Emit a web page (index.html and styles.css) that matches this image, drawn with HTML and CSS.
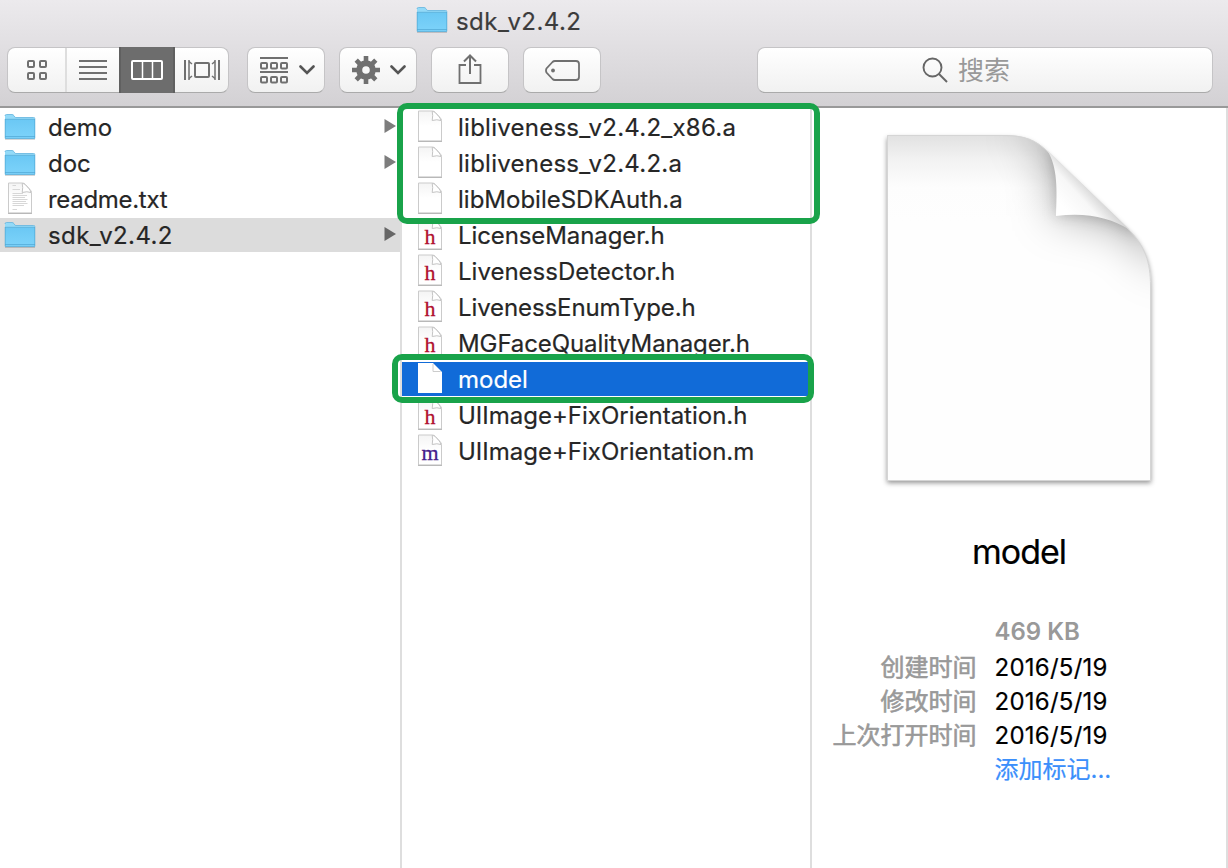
FILE: index.html
```html
<!DOCTYPE html>
<html lang="zh-CN">
<head>
<meta charset="utf-8">
<title>sdk_v2.4.2</title>
<link rel="stylesheet" href="styles.css">
</head>
<body>
<svg class="defs" width="0" height="0" aria-hidden="true">
  <defs>
    <linearGradient id="blue" x1="0" y1="0" x2="0" y2="1"><stop offset="0" stop-color="#6bc8f4"/><stop offset="1" stop-color="#7dd3fa"/></linearGradient>
    <linearGradient id="sheet" x1="0" y1="0" x2="0" y2="1"><stop offset="0" stop-color="#f4f4f4"/><stop offset=".5" stop-color="#fff"/></linearGradient>
    <symbol id="folder" viewBox="0 0 32 27">
      <path d="M1 25.2H31" stroke="#000" stroke-opacity=".18" stroke-width="1.4"/>
      <path d="M1 2q0-1.500 1.500-1.500H8q1.200 0 2 1.200L11.300 3.500H29.500q1.500 0 1.500 1.500V10H1Z" fill="#93daf8"/>
      <path d="M1 2q0-1.500 1.500-1.500H8q1.200 0 2 1.200L11.300 3.500H29.500q1.500 0 1.500 1" fill="none" stroke="#62b4de" stroke-width=".8"/>
      <path d="M1 5.500H31V24q0 .7-.7.7H1.700Q1 24.700 1 24Z" fill="url(#blue)"/>
      <path d="M1 5.300H31M1.200 5V24.400H30.800V5M1 22.500H31" fill="none" stroke="#4fa6d2" stroke-width=".7"/>
    </symbol>
    <symbol id="file" viewBox="0 0 26 33">
      <path d="M1.500 1H15.500Q17 1 18.500 2.500L23 7.500Q24.500 9 24.500 10.500V31H1.500Z" fill="url(#sheet)" stroke="#cbcbcb" stroke-width="1"/>
      <path d="M1 31.400H25" stroke="#adadad" stroke-width=".9"/>
      <path d="M15.200 1.500Q16.200 5 15.200 10.500Q20 9 24 10.500Q23.500 8.500 22 6.800L18.500 2.800Q17 1.300 15.200 1.500Z" fill="#fff" stroke="#c4c4c4" stroke-width="1"/>
    </symbol>
    <symbol id="arrow" viewBox="0 0 12 14"><path d="M.5 0 12 7 .5 14Z" fill="currentColor"/></symbol>
    <symbol id="chevron" viewBox="0 0 16 10"><path d="M1.500 1.500 8 8 14.500 1.500" fill="none" stroke="#555" stroke-width="2.600" stroke-linecap="round"/></symbol>
  </defs>
</svg>

<div class="window">
  <header class="chrome">
    <div class="title"><svg class="folder"><use href="#folder"/></svg><span>sdk_v2.4.2</span></div>
    <div class="toolbar">
      <div class="views">
        <div class="view grid-view"><svg width="22" height="22" viewBox="0 0 22 22" fill="none" stroke="#707070" stroke-width="2"><rect x="2" y="2" width="6" height="6" rx="1"/><rect x="14" y="2" width="6" height="6" rx="1"/><rect x="2" y="14" width="6" height="6" rx="1"/><rect x="14" y="14" width="6" height="6" rx="1"/></svg></div>
        <div class="view list-view"><svg width="28" height="20" viewBox="0 0 28 20" stroke="#707070" stroke-width="2"><path d="M0 1H28M0 7H28M0 13H28M0 19H28"/></svg></div>
        <div class="view active"><svg width="32" height="20" viewBox="0 0 32 20" fill="none" stroke="#fff"><rect x="1" y="1" width="30" height="18" rx="1" stroke-width="2"/><path d="M11.500 1V19M21.500 1V19" stroke-width="1.500"/></svg></div>
        <div class="view"><svg width="36" height="20" viewBox="0 0 36 20" fill="none" stroke="#707070"><rect x="11" y="3" width="14" height="14" rx="1" stroke-width="2"/><path d="M1 0V20M35 0V20" stroke-width="2"/><path d="M5 0V20M31 0V20" stroke-width="1.500"/><path d="M5 1.500 8 4M5 18.500 8 16M31 1.500 28 4M31 18.500 28 16" stroke-width="1.500"/></svg></div>
      </div>
      <div class="button"><svg width="28" height="27" viewBox="0 0 28 27" fill="none" stroke="#707070" stroke-width="2"><path d="M0 1H28M0 15H28"/><rect x="1" y="6" width="6" height="5.500" rx="1"/><rect x="11" y="6" width="6" height="5.500" rx="1"/><rect x="21" y="6" width="6" height="5.500" rx="1"/><rect x="1" y="20" width="6" height="5.500" rx="1"/><rect x="11" y="20" width="6" height="5.500" rx="1"/><rect x="21" y="20" width="6" height="5.500" rx="1"/></svg><svg class="chevron"><use href="#chevron"/></svg></div>
      <div class="button gear"><svg width="28" height="28" viewBox="0 0 28 28"><g fill="none" stroke="#707070"><circle cx="14" cy="14" r="6.800" stroke-width="6"/><g stroke-width="4.600"><path d="M14 0V6M14 22V28M0 14H6M22 14H28"/><path d="M4.200 4.200 8 8M20 20 23.800 23.800M4.200 23.800 8 20M20 8 23.800 4.200"/></g></g></svg><svg class="chevron"><use href="#chevron"/></svg></div>
      <div class="button share"><svg width="24" height="30" viewBox="0 0 24 30" fill="none" stroke="#707070" stroke-width="2"><path d="M8 11H1.500V29H22.500V11H16" stroke-width="1.800"/><path d="M12 20V1M6 7.500 12 1.500 18 7.500"/></svg></div>
      <div class="button tag"><svg width="35" height="21" viewBox="0 0 35 21" fill="none" stroke="#707070" stroke-width="1.800"><path d="M10 1H31Q34 1 34 4V17Q34 20 31 20H10Q8.500 20 7.500 19L1.500 12.500Q.5 10.500 1.500 8.500L7.500 2Q8.500 1 10 1Z"/><circle cx="8" cy="10.500" r="1.900" fill="#707070" stroke="none"/></svg></div>
      <div class="search"><svg width="26" height="26" viewBox="0 0 26 26" fill="none" stroke="#666" stroke-width="1.900"><circle cx="10.500" cy="10.500" r="9"/><path d="M17 17 25 25"/></svg><span>搜索</span></div>
    </div>
  </header>

  <main class="columns">
    <section class="column places">
      <div class="row"><svg class="folder"><use href="#folder"/></svg><span class="name">demo</span><svg class="arrow"><use href="#arrow"/></svg></div>
      <div class="row"><svg class="folder"><use href="#folder"/></svg><span class="name">doc</span><svg class="arrow"><use href="#arrow"/></svg></div>
      <div class="row"><svg class="text-file" viewBox="0 0 26 33"><use href="#file"/><path d="M5.500 3.500H9M5.500 7.500H13M5.500 11.500H16M5.500 13.500H20M5.500 15.500H18M5.500 17.500H20.500M5.500 19.500H19M5.500 21.500H20.500M5.500 23.500H17M5.500 27.500H10" stroke="#d2d2d2" stroke-width=".9"/></svg><span class="name tight">readme.txt</span></div>
      <div class="row current"><svg class="folder"><use href="#folder"/></svg><span class="name version">sdk_v2.4.2</span><svg class="arrow"><use href="#arrow"/></svg></div>
    </section>

    <section class="column files">
      <div class="row"><div class="icon"><svg><use href="#file"/></svg></div><span class="name wide">libliveness_v2.4.2_x86.a</span></div>
      <div class="row"><div class="icon"><svg><use href="#file"/></svg></div><span class="name wide">libliveness_v2.4.2.a</span></div>
      <div class="row"><div class="icon"><svg><use href="#file"/></svg></div><span class="name">libMobileSDKAuth.a</span></div>
      <div class="row"><div class="icon"><svg><use href="#file"/></svg><b class="h">h</b></div><span class="name snug">LicenseManager.h</span></div>
      <div class="row"><div class="icon"><svg><use href="#file"/></svg><b class="h">h</b></div><span class="name">LivenessDetector.h</span></div>
      <div class="row"><div class="icon"><svg><use href="#file"/></svg><b class="h">h</b></div><span class="name snug">LivenessEnumType.h</span></div>
      <div class="row"><div class="icon"><svg><use href="#file"/></svg><b class="h">h</b></div><span class="name snug">MGFaceQualityManager.h</span></div>
      <div class="row selected"><div class="icon"><svg viewBox="0 0 26 33"><path d="M1 1H16L25 10V31H1Z" fill="#fff"/><path d="M16 2V9.500H23.500" fill="none" stroke="#ccc"/></svg></div><span class="name">model</span></div>
      <div class="row"><div class="icon"><svg><use href="#file"/></svg><b class="h">h</b></div><span class="name">UIImage+FixOrientation.h</span></div>
      <div class="row"><div class="icon"><svg><use href="#file"/></svg><b class="m">m</b></div><span class="name">UIImage+FixOrientation.m</span></div>
    </section>

    <section class="preview">
      <svg class="page" width="284" height="366" viewBox="877 127 284 366">
        <defs>
          <linearGradient id="top" x1="0" y1="0" x2="0" y2="1"><stop offset="0" stop-color="#e1e1e1"/><stop offset=".07" stop-color="#f2f2f2"/><stop offset=".15" stop-color="#fdfdfd"/><stop offset=".25" stop-color="#fefefe"/></linearGradient>
          <linearGradient id="curl" gradientUnits="userSpaceOnUse" x1="1064" y1="208" x2="1090" y2="184"><stop offset="0" stop-color="#fff"/><stop offset=".55" stop-color="#f7f7f7"/><stop offset="1" stop-color="#cfcfcf"/></linearGradient>
          <filter id="soft" x="-100%" y="-100%" width="300%" height="300%"><feGaussianBlur stdDeviation="23"/></filter>
          <filter id="tight" x="-50%" y="-50%" width="200%" height="200%"><feGaussianBlur stdDeviation="7"/></filter>
          <filter id="shadow" x="-10%" y="-10%" width="120%" height="120%"><feGaussianBlur stdDeviation="2.500"/></filter>
          <clipPath id="outline"><path d="M887 135H1003C1025 135 1036 140 1048 152L1128 229C1145 246 1151 262 1151 286V480.500H887Z"/></clipPath>
        </defs>
        <path d="M887 138H1003C1025 138 1036 143 1048 155L1128 231C1145 248 1151 265 1151 289V483H887Z" fill="#000" fill-opacity=".42" filter="url(#shadow)"/>
        <g clip-path="url(#outline)">
          <rect x="887" y="135" width="264" height="346" fill="url(#top)"/>
          <path d="M1020 125 1048 148C1058 168 1057 194 1056 216C1084 213 1112 219 1128 229L1172 274V125Z" fill="#000" fill-opacity=".36" filter="url(#soft)"/>
          <path d="M1048 150C1058 168 1057 194 1056 216C1084 213 1112 219 1128 230L1136 236V150Z" fill="#000" fill-opacity=".18" filter="url(#tight)"/>
        </g>
        <path d="M887.500 135.500H1003C1025 135.500 1036 140 1048 152L1128 229C1145 246 1150.500 262 1150.500 286V480.500H887.500Z" fill="none" stroke="#d5d5d5"/>
        <path d="M1047 150C1058 167 1057 191 1056 216C1085 212 1110 217 1130 230Z" fill="url(#curl)"/>
      </svg>
      <h1>model</h1>
      <dl>
        <dt></dt><dd class="size">469 KB</dd>
        <dt>创建时间</dt><dd class="date">2016/5/19</dd>
        <dt>修改时间</dt><dd class="date">2016/5/19</dd>
        <dt>上次打开时间</dt><dd class="date">2016/5/19</dd>
        <dt></dt><dd class="link">添加标记...</dd>
      </dl>
    </section>
  </main>
  <div class="mark mark-libs"></div>
  <div class="mark mark-model"></div>
</div>
</body>
</html>
```
FILE: styles.css
```css
* { box-sizing: border-box; }
body { margin: 0; font-family: Inter, "Noto Sans CJK SC", sans-serif; color: #262626; }
svg { display: block; flex: none; }
.defs { position: absolute; }
.window { position: relative; width: 1228px; height: 868px; overflow: hidden; background: #fff; display: flex; flex-direction: column; }

.chrome { height: 108px; border-bottom: 2px solid #999; background: linear-gradient(#eceaed, #d3d1d4); }
.title { height: 47px; padding: 7px 0 0 416px; display: flex; gap: 8px; font-size: 24px; line-height: 29px; color: #3c3c3c; letter-spacing: .45px; -webkit-text-stroke: .2px; }
.folder { width: 32px; height: 27px; }
.toolbar { display: flex; padding-left: 7px; height: 46px; }
.views, .button, .search { height: 46px; border-radius: 8px; background: linear-gradient(#fff, #f1f1f1); border: 1px solid #c5c4c6; border-bottom-color: #aaa; }
.views { width: 222px; display: flex; margin-right: 18px; }
.view { width: 53px; display: flex; align-items: center; justify-content: center; }
.grid-view { width: 59px; border-right: 2px solid #dedede; }
.list-view { width: 52px; }
.active { width: 56px; margin: -1px 0; background: #6d6d6d; border: 1px solid #606060; border-width: 0 2px; }
.button { width: 78px; margin-right: 14px; display: flex; align-items: center; padding-left: 12px; gap: 11px; }
.chevron { width: 16px; height: 10px; }
.gear .chevron { margin-left: -1px; }
.share { padding: 0 0 2px 26px; }
.tag { padding-left: 21px; }
.search { width: 456px; margin-left: 142px; display: flex; align-items: center; padding-left: 164px; gap: 10px; font-size: 26px; color: #999; }
.search span { line-height: 36px; padding-top: 1px; }

.columns { flex: 1; display: flex; border-right: 2px solid #dedede; }
.column { padding-top: 2px; border-right: 2px solid #dedede; font-size: 24px; }
.places { width: 402px; }
.files { width: 410px; }
.row { height: 34px; margin-bottom: 2px; display: flex; align-items: center; }
.places .row { padding: 0 4px 0 4px; }
.current { background: #dcdcdc; }
.places .folder { margin-right: 12px; }
.text-file { width: 26px; height: 33px; margin: -2px 15px 0 3px; }
.arrow { width: 12px; height: 14px; margin: -2px 0 0 auto; color: #7d7d7d; }
.current .arrow { color: #666; }
.name { line-height: 34px; padding-top: 2px; white-space: nowrap; -webkit-text-stroke: .2px; }
.tight { letter-spacing: -.3px; }
.snug { letter-spacing: -.1px; }
.wide { letter-spacing: .25px; }
.version { letter-spacing: .4px; }
.files .row { padding-left: 15px; }
.icon { width: 26px; height: 33px; margin: -2px 15px 0 0; display: grid; }
.icon svg, .icon b { grid-area: 1 / 1; }
.icon svg { width: 26px; height: 33px; }
.icon b { z-index: 1; text-align: center; font: 22px/38px "Liberation Serif", serif; -webkit-text-stroke: .3px; }
.h { color: #b01030; }
.m { color: #45208c; }
.selected { background: #116bd8; color: #fff; }

.preview { flex: 1; display: flex; flex-direction: column; align-items: center; padding-top: 19px; color: #000; }
h1 { margin: 37px 0 0; font-size: 34px; line-height: 44px; font-weight: 400; letter-spacing: -1px; -webkit-text-stroke: .2px; }
dl { display: grid; grid-template-columns: 164px 231px; grid-template-rows: 36px repeat(4, 34px); column-gap: 18px; margin: 41px 0 0; font-size: 24px; line-height: 34px; }
dt { text-align: right; color: #999; -webkit-text-stroke: .6px; white-space: nowrap; }
dd { margin: 0; white-space: nowrap; }
.size { color: #999; font-weight: 600; }
.date { letter-spacing: .25px; -webkit-text-stroke: .2px; }
.link { color: #3b8ffb; -webkit-text-stroke: .2px; }

.mark { position: absolute; border: 6px solid #19a34a; border-radius: 10px; }
.mark-libs { left: 397px; top: 103px; width: 423px; height: 121px; }
.mark-model { left: 392px; top: 354px; width: 422px; height: 49px; }
```
